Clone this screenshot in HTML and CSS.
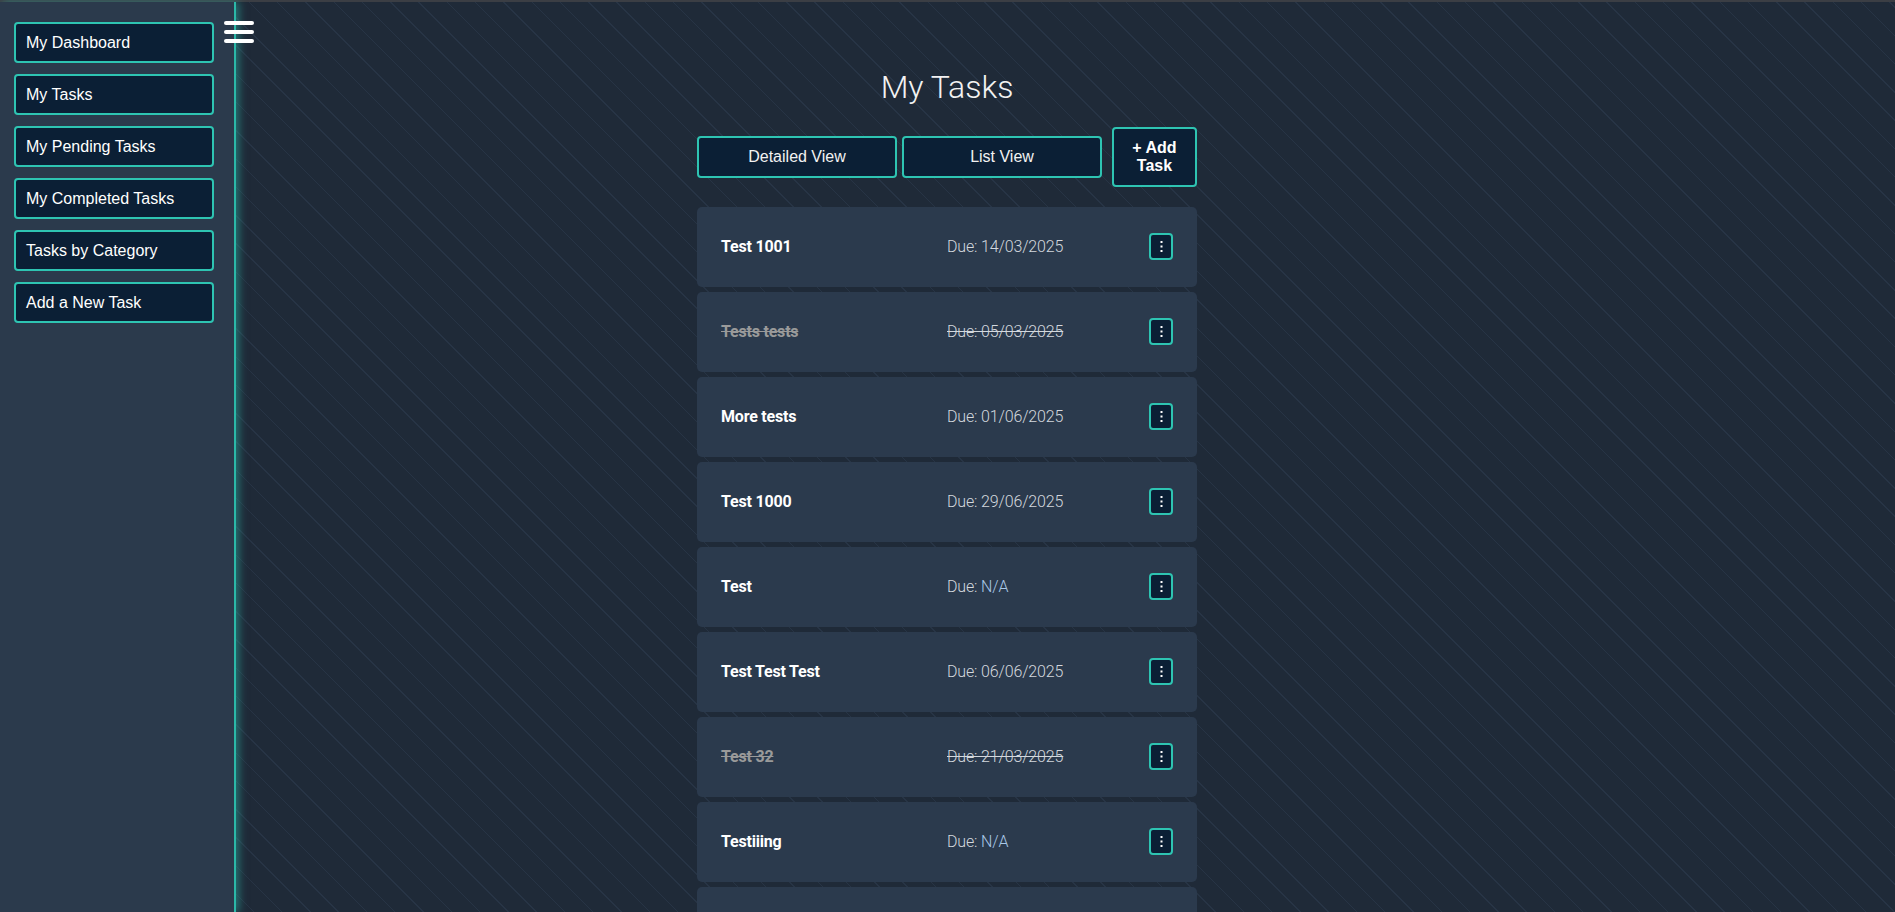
FILE: index.html
```html
<!DOCTYPE html>
<html lang="en">
<head>
<meta charset="utf-8">
<title>My Tasks</title>
<link rel="stylesheet" href="styles.css">
</head>
<body>
<div class="topline"></div>
<div class="layout">
  <aside class="sidebar">
    <nav class="side-nav">
      <a class="side-btn" href="#">My Dashboard</a>
      <a class="side-btn" href="#">My Tasks</a>
      <a class="side-btn" href="#">My Pending Tasks</a>
      <a class="side-btn" href="#">My Completed Tasks</a>
      <a class="side-btn" href="#">Tasks by Category</a>
      <a class="side-btn" href="#">Add a New Task</a>
    </nav>
    <button class="hamburger" aria-label="Toggle menu">
      <span class="bar"></span><span class="bar"></span><span class="bar"></span>
    </button>
  </aside>

  <main class="main">
    <h1 class="page-title">My Tasks</h1>
    <div class="toolbar">
      <button class="tool-btn view-btn">Detailed View</button>
      <button class="tool-btn view-btn">List View</button>
      <button class="tool-btn add-btn">+ Add Task</button>
    </div>

    <ul class="task-list">
      <li class="task">
        <span class="task-title">Test 1001</span>
        <span class="task-due">Due: 14/03/2025</span>
        <button class="kebab" aria-label="Options"><svg width="3" height="11" viewBox="0 0 3 11"><rect x="0.5" y="0" width="2" height="2" fill="#fff"/><rect x="0.5" y="4.5" width="2" height="2" fill="#fff"/><rect x="0.5" y="9" width="2" height="2" fill="#fff"/></svg></button>
      </li>
      <li class="task done">
        <span class="task-title">Tests tests</span>
        <span class="task-due">Due: 05/03/2025</span>
        <button class="kebab" aria-label="Options"><svg width="3" height="11" viewBox="0 0 3 11"><rect x="0.5" y="0" width="2" height="2" fill="#fff"/><rect x="0.5" y="4.5" width="2" height="2" fill="#fff"/><rect x="0.5" y="9" width="2" height="2" fill="#fff"/></svg></button>
      </li>
      <li class="task">
        <span class="task-title">More tests</span>
        <span class="task-due">Due: 01/06/2025</span>
        <button class="kebab" aria-label="Options"><svg width="3" height="11" viewBox="0 0 3 11"><rect x="0.5" y="0" width="2" height="2" fill="#fff"/><rect x="0.5" y="4.5" width="2" height="2" fill="#fff"/><rect x="0.5" y="9" width="2" height="2" fill="#fff"/></svg></button>
      </li>
      <li class="task">
        <span class="task-title">Test 1000</span>
        <span class="task-due">Due: 29/06/2025</span>
        <button class="kebab" aria-label="Options"><svg width="3" height="11" viewBox="0 0 3 11"><rect x="0.5" y="0" width="2" height="2" fill="#fff"/><rect x="0.5" y="4.5" width="2" height="2" fill="#fff"/><rect x="0.5" y="9" width="2" height="2" fill="#fff"/></svg></button>
      </li>
      <li class="task">
        <span class="task-title">Test</span>
        <span class="task-due">Due: <span class="na">N/A</span></span>
        <button class="kebab" aria-label="Options"><svg width="3" height="11" viewBox="0 0 3 11"><rect x="0.5" y="0" width="2" height="2" fill="#fff"/><rect x="0.5" y="4.5" width="2" height="2" fill="#fff"/><rect x="0.5" y="9" width="2" height="2" fill="#fff"/></svg></button>
      </li>
      <li class="task">
        <span class="task-title">Test Test Test</span>
        <span class="task-due">Due: 06/06/2025</span>
        <button class="kebab" aria-label="Options"><svg width="3" height="11" viewBox="0 0 3 11"><rect x="0.5" y="0" width="2" height="2" fill="#fff"/><rect x="0.5" y="4.5" width="2" height="2" fill="#fff"/><rect x="0.5" y="9" width="2" height="2" fill="#fff"/></svg></button>
      </li>
      <li class="task done">
        <span class="task-title">Test 32</span>
        <span class="task-due">Due: 21/03/2025</span>
        <button class="kebab" aria-label="Options"><svg width="3" height="11" viewBox="0 0 3 11"><rect x="0.5" y="0" width="2" height="2" fill="#fff"/><rect x="0.5" y="4.5" width="2" height="2" fill="#fff"/><rect x="0.5" y="9" width="2" height="2" fill="#fff"/></svg></button>
      </li>
      <li class="task">
        <span class="task-title">Testiiing</span>
        <span class="task-due">Due: <span class="na">N/A</span></span>
        <button class="kebab" aria-label="Options"><svg width="3" height="11" viewBox="0 0 3 11"><rect x="0.5" y="0" width="2" height="2" fill="#fff"/><rect x="0.5" y="4.5" width="2" height="2" fill="#fff"/><rect x="0.5" y="9" width="2" height="2" fill="#fff"/></svg></button>
      </li>
      <li class="task">
        <span class="task-title">Another test</span>
        <span class="task-due">Due: <span class="na">N/A</span></span>
        <button class="kebab" aria-label="Options"><svg width="3" height="11" viewBox="0 0 3 11"><rect x="0.5" y="0" width="2" height="2" fill="#fff"/><rect x="0.5" y="4.5" width="2" height="2" fill="#fff"/><rect x="0.5" y="9" width="2" height="2" fill="#fff"/></svg></button>
      </li>
    </ul>
  </main>
</div>
</body>
</html>
```

FILE: styles.css
```css
* { box-sizing: border-box; }

html, body { margin: 0; padding: 0; }

body {
  background-color: #1f2a38;
  background-image: repeating-linear-gradient(45deg, transparent 0 19px, #273445 19px 20px);
  background-attachment: fixed;
  font-family: "Liberation Sans", Arial, sans-serif;
  color: #fff;
  overflow: hidden;
}

.topline {
  height: 2px;
  background: #3b3e44;
}

.layout {
  display: grid;
  grid-template-columns: 1fr;
  grid-template-rows: auto;
}

.sidebar {
  grid-area: 1 / 1;
  align-self: start;
  position: relative;
  z-index: 2;
  width: 236px;
  height: calc(100vh - 2px);
  background: #2b3a4c;
  border-right: 2px solid #2bb8a8;
  box-shadow: 3px 0 8px rgba(43, 190, 175, 0.5);
  padding: 20px 0 0 14px;
}

.side-nav {
  display: flex;
  flex-direction: column;
  gap: 11px;
}

.side-btn {
  display: flex;
  align-items: center;
  width: 200px;
  height: 41px;
  padding: 0 10px;
  background: #0b1f35;
  border: 2px solid #2ec4b2;
  border-radius: 4px;
  color: #fff;
  text-decoration: none;
  font-size: 16px;
}

.hamburger {
  position: absolute;
  top: 19px;
  left: 224px;
  width: 30px;
  padding: 0;
  border: 0;
  background: transparent;
  display: flex;
  flex-direction: column;
  gap: 5px;
  cursor: pointer;
}

.hamburger .bar {
  display: block;
  width: 30px;
  height: 4px;
  border-radius: 2px;
  background: #fff;
}

.main {
  grid-area: 1 / 1;
  display: flex;
  flex-direction: column;
  align-items: center;
  padding-top: 67px;
  padding-right: 1px;
}

.page-title {
  margin: 0 0 20px;
  font-family: Roboto, "Liberation Sans", sans-serif;
  font-weight: 300;
  font-size: 32px;
  line-height: 1.172;
  color: #f2f2f2;
}

.toolbar {
  display: flex;
  align-items: center;
  width: 500px;
  margin-bottom: 20px;
}

.tool-btn {
  font-family: "Liberation Sans", Arial, sans-serif;
  font-size: 16px;
  color: #f2f2f2;
  background: #0b1f35;
  border: 2px solid #2ec4b2;
  border-radius: 4px;
  padding: 10px;
  line-height: 18px;
  cursor: pointer;
}

.view-btn {
  width: 200px;
  height: 42px;
}

.view-btn + .view-btn { margin-left: 5px; }

.add-btn {
  width: 85px;
  height: 60px;
  margin-left: 10px;
  font-weight: 700;
  color: #fff;
  padding: 10px 6px;
}

.task-list {
  list-style: none;
  margin: 0;
  padding: 0;
  width: 500px;
  display: flex;
  flex-direction: column;
  gap: 5px;
}

.task {
  display: flex;
  align-items: center;
  height: 80px;
  padding: 0 24px;
  background: #2b3a4d;
  border-radius: 5px;
}

.task-title {
  width: 50%;
  font-family: Roboto, "Liberation Sans", sans-serif;
  font-weight: 700;
  font-size: 16px;
  letter-spacing: -0.2px;
  color: #fff;
}

.task-due {
  font-family: Roboto, "Liberation Sans", sans-serif;
  font-weight: 300;
  font-size: 16px;
  letter-spacing: -0.15px;
  color: #d3d8de;
}

.na { color: #a9c8e8; }

.task.done .task-title {
  color: #9a9a9a;
  text-decoration: line-through;
}

.task.done .task-due {
  text-decoration: line-through;
}

.kebab {
  margin-left: auto;
  width: 24px;
  height: 27px;
  padding: 0;
  display: flex;
  align-items: center;
  justify-content: center;
  background: #0b1f35;
  border: 2px solid #2ec4b2;
  border-radius: 4px;
  cursor: pointer;
}
```
